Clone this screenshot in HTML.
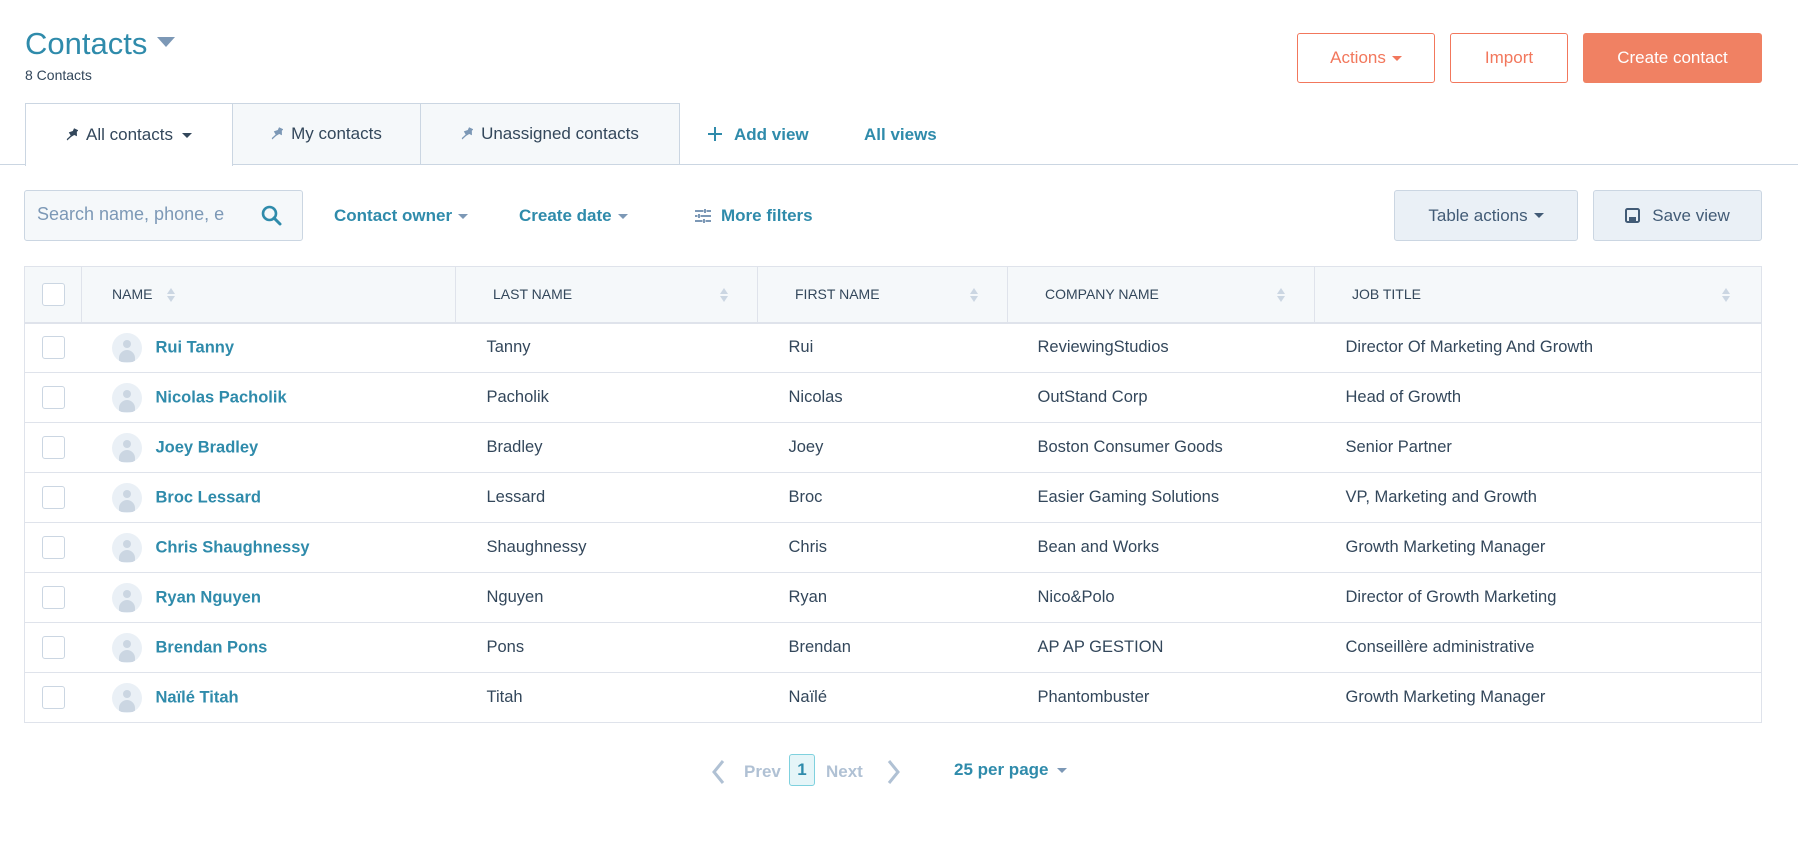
<!DOCTYPE html>
<html><head><meta charset="utf-8"><style>
*{box-sizing:border-box;margin:0;padding:0}
body{width:1798px;height:855px;background:#fff;font-family:"Liberation Sans",sans-serif;color:#33475b;position:relative;overflow:hidden}
.a{position:absolute}
.link{color:#2f8bab;font-weight:bold}
.btn{position:absolute;border-radius:3px;display:flex;align-items:center;justify-content:center;font-size:17px}
.car{display:inline-block;width:0;height:0;border-left:5px solid transparent;border-right:5px solid transparent;border-top:5px solid currentColor;margin-left:6px;vertical-align:middle}
.tab{position:absolute;top:103px;height:62px;display:flex;align-items:center;justify-content:center;font-size:17px;border:1px solid #cbd6e2;background:#f5f8fa}
.pin{margin-right:8px}
table{position:absolute;left:24px;top:266px;width:1738px;border-collapse:collapse;border:1px solid #dfe3eb}
td,th{height:50px;border-bottom:1px solid #dfe3eb;font-size:16.5px;text-align:left;font-weight:normal;padding:0}
th{height:56px;background:#f5f8fa;font-size:14px;border-right:1px solid #dfe3eb;border-bottom:2px solid #dfe3eb;position:relative}
.cb{display:inline-block;width:23px;height:23px;border:1px solid #cbd6e2;border-radius:3px;background:#fff;vertical-align:middle}
.av{display:inline-block;width:30px;height:30px;border-radius:50%;background:#eaf0f6;vertical-align:middle;margin-right:14px;position:relative;overflow:hidden}
.av:before{content:"";position:absolute;left:11px;top:7px;width:8px;height:8px;border-radius:50%;background:#cbd6e2}
.av:after{content:"";position:absolute;left:7px;top:17px;width:16px;height:12px;border-radius:8px 8px 0 0;background:#cbd6e2}
.sort{position:absolute;top:21px;width:8px}
.sort:before{content:"";position:absolute;top:0;border-left:4px solid transparent;border-right:4px solid transparent;border-bottom:6px solid #cbd6e2}
.sort:after{content:"";position:absolute;top:8px;border-left:4px solid transparent;border-right:4px solid transparent;border-top:6px solid #cbd6e2}
</style></head><body>
<div class="a" style="left:25px;top:26px;font-size:31px;color:#2f8bab">Contacts<span style="display:inline-block;border-left:9px solid transparent;border-right:9px solid transparent;border-top:10px solid #7c98b6;margin-left:10px;vertical-align:middle;position:relative;top:-4px"></span></div>
<div class="a" style="left:25px;top:67px;font-size:14px">8 Contacts</div>

<div class="btn" style="left:1297px;top:33px;width:138px;height:50px;border:1px solid #f2775c;color:#f2775c">Actions<span class="car"></span></div>
<div class="btn" style="left:1450px;top:33px;width:118px;height:50px;border:1px solid #f2775c;color:#f2775c">Import</div>
<div class="btn" style="left:1583px;top:33px;width:179px;height:50px;background:#f08163;color:#fff">Create contact</div>

<div class="a" style="left:0;top:164px;width:1798px;height:1px;background:#cbd6e2"></div>
<div class="tab" style="left:25px;width:208px;background:#fff;border-bottom:none;height:63px;color:#33475b"><svg class="pin" width="12" height="14" viewBox="0 0 12 14"><path d="M5 0h5l-1 2 2 4H8L6 9 4 14 3 13 5 8 2 6l3-3z" fill="#33475b" transform="rotate(25 6 7)"/></svg>All contacts<span class="car" style="margin-left:9px"></span></div>
<div class="tab" style="left:232px;width:189px;color:#33475b"><svg class="pin" width="12" height="14" viewBox="0 0 12 14"><path d="M5 0h5l-1 2 2 4H8L6 9 4 14 3 13 5 8 2 6l3-3z" fill="#7c98b6" transform="rotate(25 6 7)"/></svg>My contacts</div>
<div class="tab" style="left:420px;width:260px;color:#33475b"><svg class="pin" width="12" height="14" viewBox="0 0 12 14"><path d="M5 0h5l-1 2 2 4H8L6 9 4 14 3 13 5 8 2 6l3-3z" fill="#7c98b6" transform="rotate(25 6 7)"/></svg>Unassigned contacts</div>
<svg class="a" style="left:708px;top:127px" width="14" height="14"><path d="M7 0v14M0 7h14" stroke="#2f8bab" stroke-width="2"/></svg>
<div class="a link" style="left:734px;top:125px;font-size:17px">Add view</div>
<div class="a link" style="left:864px;top:125px;font-size:17px">All views</div>

<div class="a" style="left:24px;top:190px;width:279px;height:51px;border:1px solid #cbd6e2;border-radius:3px;background:#f5f8fa;font-size:18px;color:#7c98b6;padding:13px 12px;white-space:nowrap;overflow:hidden">Search name, phone, e</div>
<svg class="a" style="left:261px;top:205px" width="22" height="22" viewBox="0 0 22 22"><circle cx="8.5" cy="8.5" r="6.5" fill="none" stroke="#2f8bab" stroke-width="2.6"/><path d="M13 13l6 6" stroke="#2f8bab" stroke-width="3" stroke-linecap="round"/></svg>
<div class="a link" style="left:334px;top:206px;font-size:17px">Contact owner<span class="car" style="color:#7c98b6"></span></div>
<div class="a link" style="left:519px;top:206px;font-size:17px">Create date<span class="car" style="color:#7c98b6"></span></div>
<svg class="a" style="left:695px;top:208px" width="16" height="16"><path d="M0 3h16M0 8h16M0 13h16" stroke="#7c98b6" stroke-width="2"/><path d="M10 0v6M4 5v6M9 10v6" stroke="#fff" stroke-width="3"/><path d="M10 1v4M4 6v4M9 11v4" stroke="#7c98b6" stroke-width="2"/></svg>
<div class="a link" style="left:721px;top:206px;font-size:17px">More filters</div>

<div class="btn" style="left:1394px;top:190px;width:184px;height:51px;background:#eaf0f6;border:1px solid #cbd6e2;color:#425b76">Table actions<span class="car"></span></div>
<div class="btn" style="left:1593px;top:190px;width:169px;height:51px;background:#eaf0f6;border:1px solid #cbd6e2;color:#425b76"><svg width="15" height="15" style="margin-right:12px"><rect x="1" y="1" width="13" height="13" rx="1.5" fill="none" stroke="#425b76" stroke-width="2"/><rect x="4" y="9" width="7" height="5" fill="#425b76"/></svg>Save view</div>

<table>
<tr><th style="width:57px;text-align:center"><span class="cb"></span></th>
<th style="width:374px;padding-left:30px">NAME<span class="sort" style="left:85px"></span></th>
<th style="width:302px;padding-left:37px">LAST NAME<span class="sort" style="left:264px"></span></th>
<th style="width:250px;padding-left:37px">FIRST NAME<span class="sort" style="left:212px"></span></th>
<th style="width:307px;padding-left:37px">COMPANY NAME<span class="sort" style="left:269px"></span></th>
<th style="padding-left:37px">JOB TITLE<span class="sort" style="left:407px"></span></th></tr>
<tr><td style="text-align:center"><span class="cb"></span></td><td style="padding-left:30px"><span class="av"></span><span class="link">Rui Tanny</span></td><td style="padding-left:31px">Tanny</td><td style="padding-left:31px">Rui</td><td style="padding-left:30px">ReviewingStudios</td><td style="padding-left:31px">Director Of Marketing And Growth</td></tr>
<tr><td style="text-align:center"><span class="cb"></span></td><td style="padding-left:30px"><span class="av"></span><span class="link">Nicolas Pacholik</span></td><td style="padding-left:31px">Pacholik</td><td style="padding-left:31px">Nicolas</td><td style="padding-left:30px">OutStand Corp</td><td style="padding-left:31px">Head of Growth</td></tr>
<tr><td style="text-align:center"><span class="cb"></span></td><td style="padding-left:30px"><span class="av"></span><span class="link">Joey Bradley</span></td><td style="padding-left:31px">Bradley</td><td style="padding-left:31px">Joey</td><td style="padding-left:30px">Boston Consumer Goods</td><td style="padding-left:31px">Senior Partner</td></tr>
<tr><td style="text-align:center"><span class="cb"></span></td><td style="padding-left:30px"><span class="av"></span><span class="link">Broc Lessard</span></td><td style="padding-left:31px">Lessard</td><td style="padding-left:31px">Broc</td><td style="padding-left:30px">Easier Gaming Solutions</td><td style="padding-left:31px">VP, Marketing and Growth</td></tr>
<tr><td style="text-align:center"><span class="cb"></span></td><td style="padding-left:30px"><span class="av"></span><span class="link">Chris Shaughnessy</span></td><td style="padding-left:31px">Shaughnessy</td><td style="padding-left:31px">Chris</td><td style="padding-left:30px">Bean and Works</td><td style="padding-left:31px">Growth Marketing Manager</td></tr>
<tr><td style="text-align:center"><span class="cb"></span></td><td style="padding-left:30px"><span class="av"></span><span class="link">Ryan Nguyen</span></td><td style="padding-left:31px">Nguyen</td><td style="padding-left:31px">Ryan</td><td style="padding-left:30px">Nico&amp;Polo</td><td style="padding-left:31px">Director of Growth Marketing</td></tr>
<tr><td style="text-align:center"><span class="cb"></span></td><td style="padding-left:30px"><span class="av"></span><span class="link">Brendan Pons</span></td><td style="padding-left:31px">Pons</td><td style="padding-left:31px">Brendan</td><td style="padding-left:30px">AP AP GESTION</td><td style="padding-left:31px">Conseillère administrative</td></tr>
<tr><td style="text-align:center"><span class="cb"></span></td><td style="padding-left:30px"><span class="av"></span><span class="link">Naïlé Titah</span></td><td style="padding-left:31px">Titah</td><td style="padding-left:31px">Naïlé</td><td style="padding-left:30px">Phantombuster</td><td style="padding-left:31px">Growth Marketing Manager</td></tr>
</table>

<svg class="a" style="left:711px;top:759px" width="16" height="26"><path d="M12 2L3 13l9 11" fill="none" stroke="#b0c1d4" stroke-width="3"/></svg>
<div class="a" style="left:744px;top:762px;font-size:17px;color:#b0c1d4;font-weight:bold">Prev</div>
<div class="a" style="left:789px;top:754px;width:26px;height:32px;border:1px solid #7fd1de;background:#e5f5f8;border-radius:3px;color:#2f8bab;font-size:17px;font-weight:bold;text-align:center;line-height:30px">1</div>
<div class="a" style="left:826px;top:762px;font-size:17px;color:#b0c1d4;font-weight:bold">Next</div>
<svg class="a" style="left:885px;top:759px" width="16" height="26"><path d="M4 2l9 11-9 11" fill="none" stroke="#b0c1d4" stroke-width="3"/></svg>
<div class="a link" style="left:954px;top:760px;font-size:17px">25 per page<span class="car" style="color:#7c98b6;margin-left:8px"></span></div>
</body></html>
